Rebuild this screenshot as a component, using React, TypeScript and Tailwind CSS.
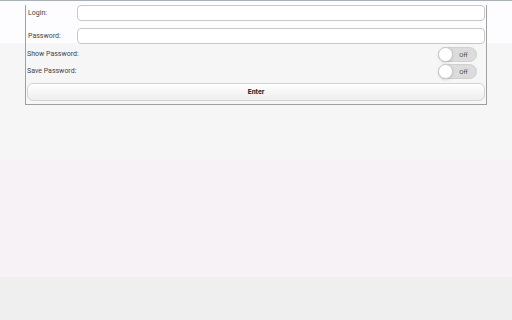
import React from 'react';

const Toggle: React.FC = () => (
  <div className="w-[39px] h-[15px] rounded-full bg-[#dcdcdc] border border-[#d0d0d0] flex items-center">
    <div className="w-[15px] h-[15px] rounded-full bg-white border border-[#c8c8c8] shadow-sm -ml-[1px]" />
    <span className="flex-1 text-center text-[6px] text-[#444] pr-[2px]">Off</span>
  </div>
);

const App: React.FC = () => {
  return (
    <div className="w-[512px] h-[320px] overflow-hidden bg-[linear-gradient(to_bottom,#fdfcfe_0px,#fdfcfe_43px,#f6f6f6_43px,#f6f6f6_160px,#f6f2f6_160px,#f6f2f6_277px,#efefef_277px)] font-['Roboto','Liberation_Sans',sans-serif] text-[7px] text-[#444]">
      <div className="h-[1px] bg-[#aab0b8]" />
      <div className="ml-[25px] w-[462px] border-x border-b border-[#a0a0a0] px-[1px] pb-[3px]">
        {/* login */}
        <div className="flex items-center h-[16px] mt-[4px]">
          <span className="w-[50px] pl-[1px]">Login:</span>
          <div className="flex-1 h-[16px] rounded-[4px] border border-[#c8c8c8] bg-white" />
        </div>
        <div className="flex items-center h-[16px] mt-[7px]">
          <span className="w-[50px] pl-[1px]">Password:</span>
          <div className="flex-1 h-[16px] rounded-[4px] border border-[#c8c8c8] bg-white" />
        </div>
        {/* switches */}
        <div className="flex items-center justify-between h-[15px] mt-[3px] pr-[8px]">
          <span>Show Password:</span>
          <Toggle />
        </div>
        <div className="flex items-center justify-between h-[15px] mt-[2px] pr-[8px]">
          <span>Save Password:</span>
          <Toggle />
        </div>
        <button className="mt-[4px] w-full h-[18px] rounded-[6px] border border-[#d4d4d4] bg-[linear-gradient(to_bottom,#ffffff,#ededed)] text-[7px] font-bold text-[#222]">
          Enter
        </button>
      </div>
    </div>
  );
};

export default App;
